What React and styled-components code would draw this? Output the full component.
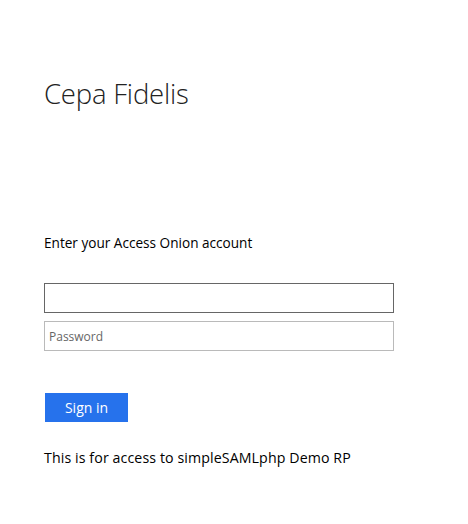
import React from "react";
import styled, { createGlobalStyle } from "styled-components";

const GlobalStyle = createGlobalStyle`
  body {
    margin: 0;
    background: #fff;
    font-family: "Open Sans", "Noto Sans", "Liberation Sans", sans-serif;
    color: #000;
  }
`;

const Page = styled.div`
  padding: 74px 0 0 44px;
  width: 350px;
`;

const Title = styled.h1`
  margin: 0;
  font-size: 27.5px;
  font-weight: 300;
  color: #222;
  line-height: 40px;
  letter-spacing: -0.2px;
`;

const Intro = styled.p`
  margin: 119px 0 0;
  font-size: 13.6px;
  line-height: 19px;
  color: #000;
`;

const Form = styled.form`
  display: flex;
  flex-direction: column;
  gap: 8px;
  margin-top: 31px;
`;

const Field = styled.input`
  box-sizing: border-box;
  width: 350px;
  height: 30px;
  margin: 0;
  padding: 0 4px;
  border: 1px solid ${(p) => (p.$active ? "#666" : "#bababa")};
  font-family: inherit;
  font-size: 12px;
  color: #000;
  outline: none;
  &::placeholder {
    color: #666;
  }
`;

const Button = styled.button`
  box-sizing: border-box;
  width: 83px;
  height: 29px;
  margin-top: 34px;
  margin-left: 1px;
  border: none;
  background: #2672ec;
  color: #fff;
  font-family: inherit;
  font-size: 14px;
  cursor: pointer;
`;

const Note = styled.p`
  margin: 26px 0 0;
  font-size: 14.2px;
  line-height: 19px;
  letter-spacing: 0.1px;
`;

export default function App() {
  return (
    <>
      <GlobalStyle />
      <Page>
        <Title>Cepa Fidelis</Title>
        <Intro>Enter your Access Onion account</Intro>
        <Form onSubmit={(e) => e.preventDefault()}>
          <Field $active autoFocus type="text" />
          <Field type="password" placeholder="Password" />
          <div>
            <Button type="submit">Sign in</Button>
          </div>
        </Form>
        <Note>This is for access to simpleSAMLphp Demo RP</Note>
      </Page>
    </>
  );
}
